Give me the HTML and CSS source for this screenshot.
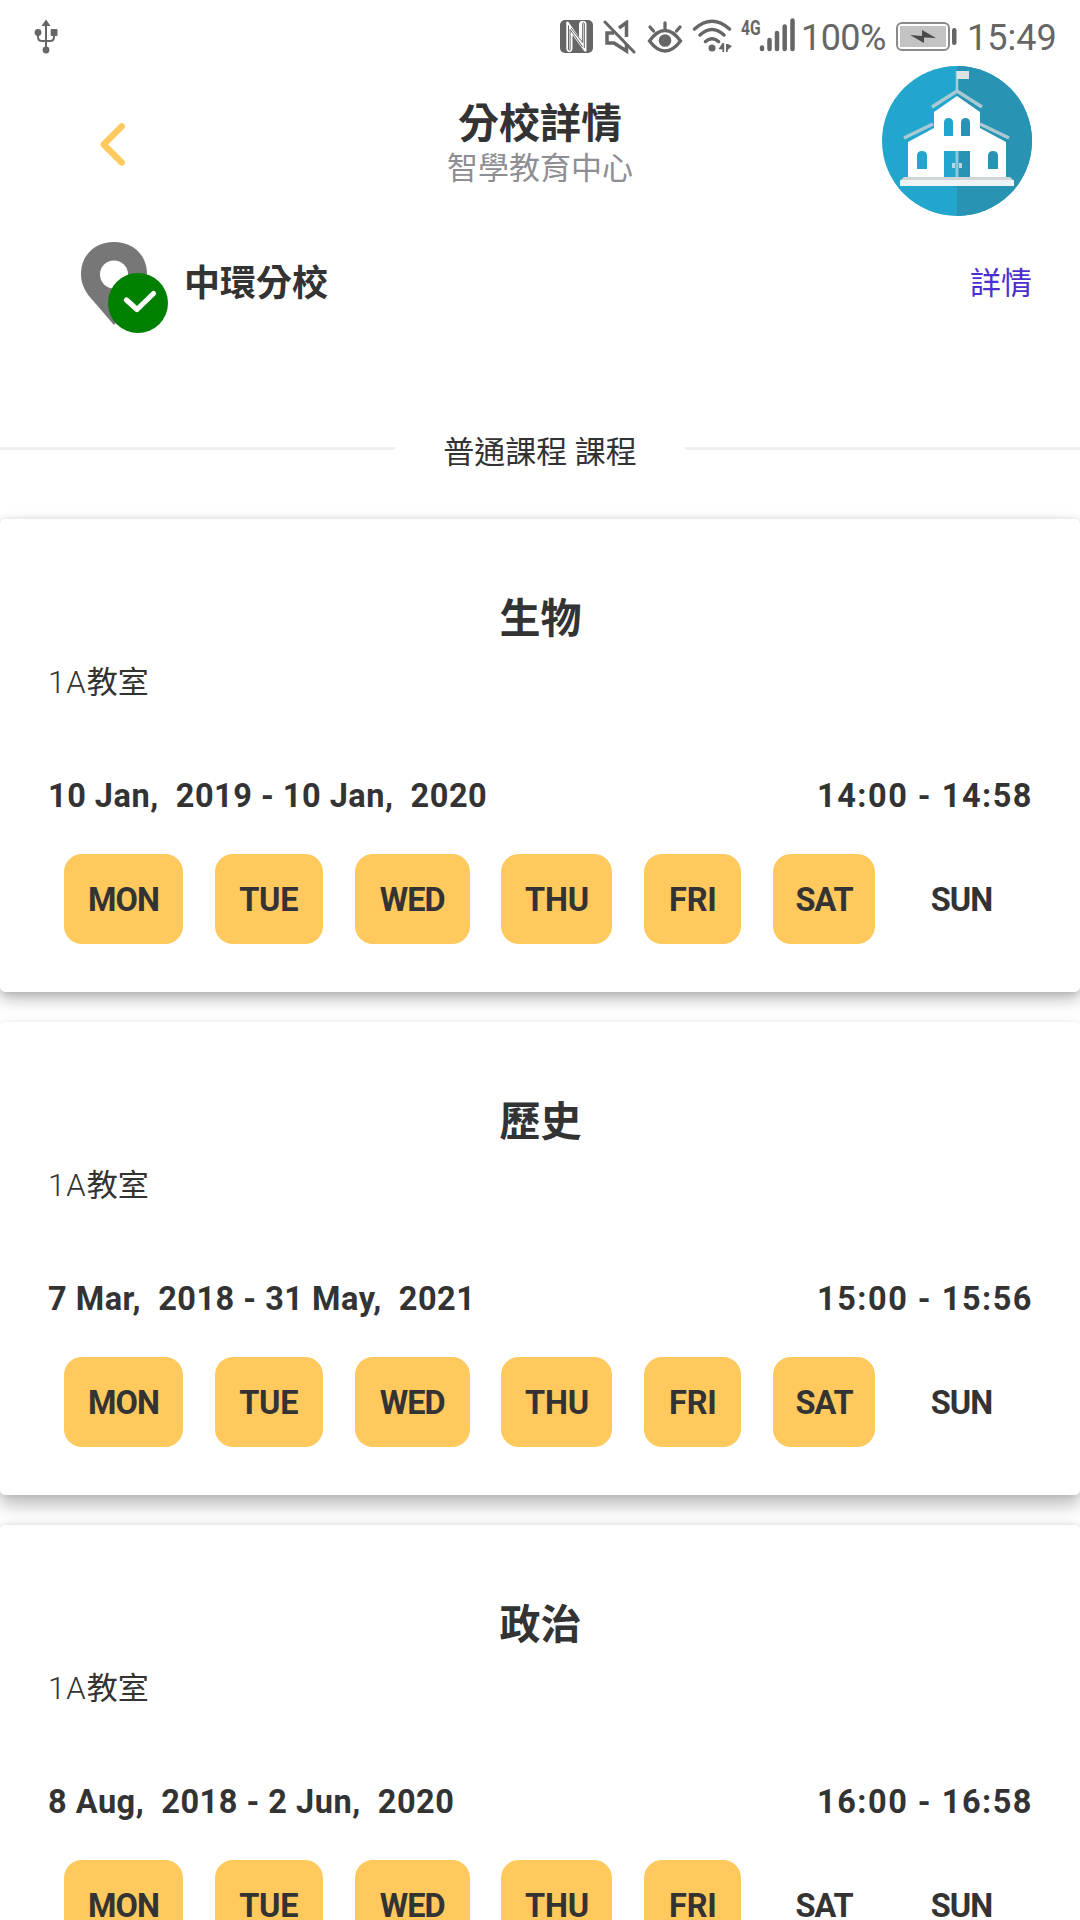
FILE: index.html
```html
<!DOCTYPE html>
<html lang="zh-Hant">
<head>
<meta charset="utf-8">
<title>分校詳情</title>
<link rel="stylesheet" href="styles.css">
</head>
<body>
<div class="status">
  <svg class="usb" width="24" height="36" viewBox="0 0 24 36" fill="none" stroke="#666" stroke-width="2"><path d="M12 6v24M4 13v5q0 4 4 4h8q4 0 4-4v-5"/><g fill="#666" stroke="none"><path d="M12 .5 16.500 7h-9z"/><circle cx="4" cy="13.500" r="3.400"/><rect x="16.700" y="10" width="6.800" height="7" rx="1"/><circle cx="12" cy="31" r="3.400"/></g></svg>
  <svg class="nfc" width="33" height="33" viewBox="0 0 33 33"><rect width="33" height="33" rx="5" fill="#666"/><path d="M6.300 2Q7.300 1 8.500 2L19 17V4q0-1.500 2-3h3.500q2 1 2 3v27q-1.200 1.500-2.400 0L12.500 15v14q0 1.500-2 3H8.300q-2-1-2-3z" fill="#fff"/><path d="M8.500 5.500V29q0 1 .8 1.500.8-.5.8-1.500V9.500L22.500 27M24.300 28V4q0-1-.8-1.500-.8.500-.8 1.500v18.500L11 8" fill="none" stroke="#666" stroke-width="1"/></svg>
  <svg class="mute" width="34" height="34" viewBox="0 0 34 34" fill="none" stroke="#666" stroke-width="3" stroke-linecap="round"><path d="M2 2 31 32"/><path d="M11 13H4v10h7l12.500 8V24M16 8l7.500-5.500V17" stroke-linecap="butt" stroke-width="3.500"/></svg>
  <svg class="eye" width="36" height="34" viewBox="0 0 36 34" fill="none" stroke="#666" stroke-width="3.300" stroke-linecap="round"><path d="M2.500 21Q10 10.500 18 10.500T33.500 21Q26 31 18 31T2.500 21zM18 9V3M6.500 11 3 7M29.500 11 33 7"/><circle cx="18" cy="20.500" r="6.300" fill="#666" stroke="none"/></svg>
  <svg class="wifi" width="42" height="34" viewBox="0 0 42 34" fill="none" stroke="#666" stroke-width="3.500" stroke-linecap="round"><path d="M2.500 10Q20-5.500 37.500 10M8 16Q20 5 32 16M13.500 22.500Q20 17 26.500 22.500"/><g fill="#666" stroke="none"><circle cx="20" cy="29" r="3.500"/><path d="M30.500 24h1.700v9h-1.700v-2.500L26.500 30zM34 25h1.700L40 27l-4.300 4v2H34z"/></g></svg>
  <span class="net">4G</span>
  <svg class="signal" width="36" height="34" viewBox="0 0 36 34" stroke="#666" stroke-width="4.500" stroke-linecap="round"><path d="M3 29.500v1.500M10.500 22v9M18 15v16M25.700 8.500V31M33.500 2.500V31"/></svg>
  <span class="percent">100%</span>
  <svg class="battery" width="61" height="29" viewBox="0 0 61 29"><rect x="1" y="1" width="52" height="27" rx="5" fill="#fff" stroke="#8a8a8a" stroke-width="2"/><rect x="4" y="4" width="46" height="21" fill="#c3c3c3"/><path d="m14 13 12 1V8l14 8-12-.5V21z" fill="#4a4a4a"/><rect x="56" y="6" width="4.500" height="17" rx="2.200" fill="#666"/></svg>
  <span class="clock">15:49</span>
</div>
<header class="header">
  <svg class="back" width="25" height="43" viewBox="0 0 25 43"><path d="M21.700 3.500 3.700 21.500l18 18" fill="none" stroke="#ffc95e" stroke-width="6.500" stroke-linecap="round" stroke-linejoin="round"/></svg>
  <div class="titles"><h1>分校詳情</h1><p>智學教育中心</p></div>
  <svg class="logo" width="150" height="150" viewBox="0 0 150 150">
    <circle cx="75" cy="75" r="75" fill="#22a6cd"/><path d="M75 0a75 75 0 0 1 0 150z" fill="#2993b3"/>
    <path d="M26 111V76l26-14V46l23-16 23 16v16l26 14v35z" fill="#fff"/>
    <path d="M22 72 51 58M50 41l25-16 25 16M98 58l29 14" fill="none" stroke="#a9c9d3" stroke-width="3.500"/>
    <path d="M75 5v20" stroke="#a3cfdc" stroke-width="2.500"/><path d="M75 5h12v8H75z" fill="#dce3e5"/>
    <path d="M62 70V57q0-5 4.500-5t4.500 5v13zM35 103V90q0-5 5-5t5 5v13zM62 85h13v26H62z" fill="#22a6cd"/>
    <path d="M79 70V57q0-5 4.500-5t4.500 5v13zM106 103V90q0-5 5-5t5 5v13zM75 85h13v26H75z" fill="#2993b3"/>
    <path d="M73.500 85h3v26h-3z" fill="#8cc9dc"/><path d="M70 97h3v5h-3zM77 97h3v5h-3z" fill="#b8d9e2"/>
    <path d="M22 111h106l4 4H18z" fill="#d0d5d7"/><path d="M18 114h114v6H18z" fill="#eef3f5"/>
  </svg>
</header>
<section class="branch">
  <svg class="pin" width="87" height="92" viewBox="0 0 87 92"><path d="M33 0C13 0 0 14 0 32c0 9 3 15 8 22l25 29 25-29c5-7 8-13 8-22C66 14 53 0 33 0z" fill="#777"/><circle cx="33" cy="32.500" r="14" fill="#fff"/><circle cx="57" cy="61" r="30" fill="#008000"/><path d="m45.500 58 10.500 9.500L72.500 51.500" fill="none" stroke="#fff" stroke-width="5.200" stroke-linecap="round" stroke-linejoin="round"/></svg>
  <h2>中環分校</h2>
  <a class="detail">詳情</a>
</section>
<div class="divider"><i></i><span>普通課程 課程</span><i></i></div>
<main class="courses">
  <article class="card">
    <h3>生物</h3>
    <p class="room"><span>1A</span>教室</p>
    <div class="when"><span class="dates">10 Jan,&nbsp; 2019 - 10 Jan,&nbsp; 2020</span><span class="time">14:00 - 14:58</span></div>
    <div class="days"><b class="mon on">MON</b><b class="tue on">TUE</b><b class="wed on">WED</b><b class="thu on">THU</b><b class="fri on">FRI</b><b class="sat on">SAT</b><b class="sun">SUN</b></div>
  </article>
  <article class="card">
    <h3>歷史</h3>
    <p class="room"><span>1A</span>教室</p>
    <div class="when"><span class="dates">7 Mar,&nbsp; 2018 - 31 May,&nbsp; 2021</span><span class="time">15:00 - 15:56</span></div>
    <div class="days"><b class="mon on">MON</b><b class="tue on">TUE</b><b class="wed on">WED</b><b class="thu on">THU</b><b class="fri on">FRI</b><b class="sat on">SAT</b><b class="sun">SUN</b></div>
  </article>
  <article class="card">
    <h3>政治</h3>
    <p class="room"><span>1A</span>教室</p>
    <div class="when"><span class="dates">8 Aug,&nbsp; 2018 - 2 Jun,&nbsp; 2020</span><span class="time">16:00 - 16:58</span></div>
    <div class="days"><b class="mon on">MON</b><b class="tue on">TUE</b><b class="wed on">WED</b><b class="thu on">THU</b><b class="fri on">FRI</b><b class="sat">SAT</b><b class="sun">SUN</b></div>
  </article>
</main>
</body>
</html>
```
FILE: styles.css
```css
* { box-sizing: border-box; }
html, body { height: 1920px; overflow: hidden; }
body { margin: 0; background: #fff; color: #333; font-family: Roboto, "Noto Sans CJK JP", sans-serif; }
h1, h2, h3, p { margin: 0; }
svg { display: block; flex: none; }

.status { height: 66px; padding: 0 25px 0 34px; display: flex; align-items: flex-start; color: #666; font-size: 36px; line-height: 42px; }
.usb { margin-top: 19px; }
.nfc { margin: 20px 0 0 auto; }
.mute { margin: 20px 0 0 10px; }
.eye { margin: 20px 0 0 10px; }
.wifi { margin: 19px 0 0 9px; }
.net { width: 19px; margin: 19px 0 0 7px; font-size: 20px; line-height: 18px; font-weight: 700; white-space: nowrap; transform: scaleX(.78); transform-origin: left; }
.signal { margin: 18px 0 0 -1px; }
.percent { width: 88px; margin: 17px 0 0 6px; letter-spacing: -.6px; white-space: nowrap; }
.battery { margin: 22px 0 0 7px; }
.clock { width: 88px; margin: 17px 0 0 10px; white-space: nowrap; }

.header { height: 150px; padding: 0 48px 0 100px; display: grid; grid-template-columns: 150px 1fr 150px; }
.back { margin-top: 57px; }
.titles { text-align: center; margin-left: -52px; padding-top: 35px; }
h1 { font-size: 41px; line-height: 46px; font-weight: 700; }
.titles p { font-size: 31px; line-height: 44px; color: #8e8e93; }

.branch { height: 132px; padding: 26px 48px 0 81px; display: flex; align-items: flex-start; }
h2 { margin: 17px 0 0 16px; font-size: 36px; line-height: 50px; font-weight: 700; }
.detail { margin: 18px 0 0 auto; font-size: 31px; line-height: 48px; color: #4c2fd0; }

.divider { height: 171px; padding-top: 79px; display: grid; grid-template-columns: 395px 290px 395px; align-items: start; text-align: center; }
.divider i { height: 3px; margin-top: 20px; background: #efefef; }
.divider span { padding-top: 2px; font-size: 31px; line-height: 48px; }

.courses { display: flex; flex-direction: column; gap: 30px; }
.card { flex: none; height: 473px; padding: 70px 48px 48px; border-radius: 5px; background: #fff; box-shadow: 0 7px 16px rgba(0, 0, 0, .27), 0 1px 7px rgba(0, 0, 0, .13); }
.card:nth-child(2) { box-shadow: 0 10px 18px rgba(0, 0, 0, .27), 0 1px 5px rgba(0, 0, 0, .08); }
h3 { padding-left: 1px; font-size: 41px; line-height: 60px; font-weight: 700; text-align: center; }
.room { height: 67px; font-size: 31px; line-height: 68px; }
.room span { font-weight: 300; letter-spacing: 1.1px; }
.when { height: 138px; display: flex; justify-content: space-between; font-size: 32.5px; font-weight: 700; line-height: 38px; padding-top: 61px; }
.dates { letter-spacing: .5px; }
.time { letter-spacing: 1.5px; margin-right: -1px; }
.days { display: flex; justify-content: space-around; }
.days b { height: 90px; border-radius: 18px; font-size: 32.5px; line-height: 93px; font-weight: 700; letter-spacing: -1px; text-align: center; }
.days .tue, .days .thu, .days .fri { letter-spacing: -.2px; }
.on { background: #ffc95e; }
.mon { width: 119px; }
.tue { width: 108px; }
.wed { width: 115px; }
.thu { width: 111px; }
.fri { width: 97px; }
.sat { width: 102px; }
.sun { width: 109px; }
```
